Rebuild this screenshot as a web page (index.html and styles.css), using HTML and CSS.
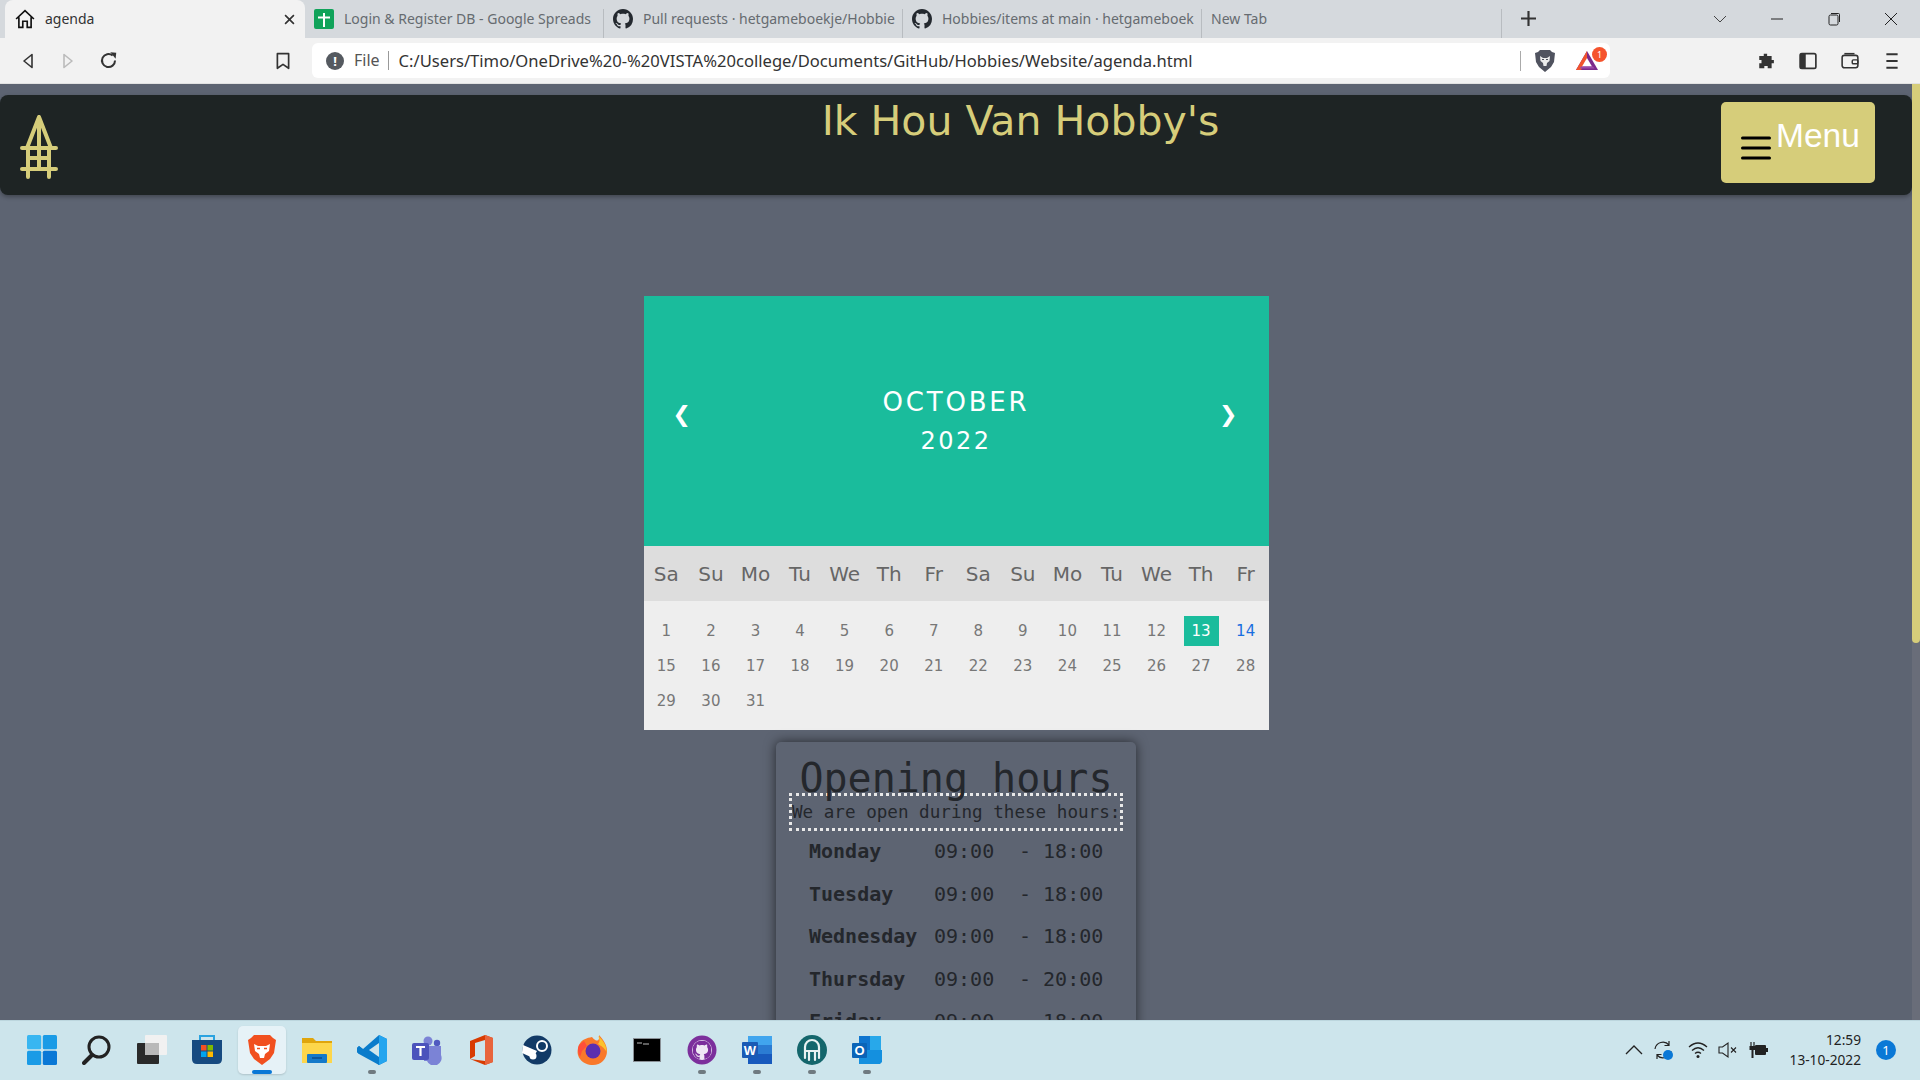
FILE: index.html
```html
<!DOCTYPE html>
<html>
<head>
    <title>agenda</title>
    <link rel="stylesheet" href="styles.css">
</head>
<body>
    <div class="tabstrip">
        <div class="tab tab-active">
            <svg class="tab-icon" viewBox="0 0 18 18"><path d="M1 9 9 1.500 17 9M3.500 7.500V16.500H7V11H11V16.500H14.500V7.500" fill="none" stroke="#111" stroke-width="1.500"/></svg>
            <span class="tab-title">agenda</span>
            <svg class="tab-close" viewBox="0 0 10 10"><path d="M1 1 9 9M9 1 1 9" stroke="#333" stroke-width="1.500"/></svg>
        </div>
        <div class="tab">
            <svg class="tab-icon" viewBox="0 0 20 20"><rect width="20" height="20" rx="2" fill="#10a35a"/><path d="M10 4V18M4 8.500H16" stroke="#fff" stroke-width="2"/></svg>
            <span class="tab-title">Login &amp; Register DB - Google Spreads</span>
        </div>
        <div class="tab">
            <svg class="tab-icon" viewBox="0 0 16 16"><use href="#gh" fill="#24292f"/></svg>
            <span class="tab-title">Pull requests · hetgameboekje/Hobbie</span>
        </div>
        <div class="tab">
            <svg class="tab-icon" viewBox="0 0 16 16"><use href="#gh" fill="#24292f"/></svg>
            <span class="tab-title">Hobbies/items at main · hetgameboek</span>
        </div>
        <div class="tab tab-new">
            <span class="tab-title">New Tab</span>
        </div>
        <svg class="tab-plus" viewBox="0 0 14 14"><path d="M7 0V14M0 7H14" stroke="#333" stroke-width="2"/></svg>
        <div class="window-buttons">
            <svg class="win-btn" viewBox="0 0 14 14"><path d="M1 4 7 10 13 4" fill="none" stroke="#444"/></svg>
            <svg class="win-btn" viewBox="0 0 14 14"><path d="M1 7H13" stroke="#222"/></svg>
            <svg class="win-btn" viewBox="0 0 14 14"><rect x="2" y="3" width="9" height="10" rx="1.500" fill="none" stroke="#222"/><path d="M4 1.500H11.500Q12.500 1.500 12.500 2.500V10" fill="none" stroke="#222"/></svg>
            <svg class="win-btn" viewBox="0 0 14 14"><path d="M1 1 13 13M13 1 1 13" stroke="#222"/></svg>
        </div>
    </div>

    <div class="toolbar">
        <div class="nav-buttons">
            <svg class="tool-icon" viewBox="0 0 16 16"><path d="M12 1.500 4 8 12 14.500Z" fill="none" stroke="#333" stroke-width="1.600" stroke-linejoin="round"/></svg>
            <svg class="tool-icon" viewBox="0 0 16 16"><path d="M4 1.500 12 8 4 14.500Z" fill="none" stroke="#bbb" stroke-width="1.600" stroke-linejoin="round"/></svg>
            <svg class="tool-icon reload" viewBox="0 0 16 16"><path d="M13.500 8A5.500 5.500 0 1 1 11.500 3.800" fill="none" stroke="#333" stroke-width="1.700"/><path d="M9.500 1 14.500 1.500 14 6.500Z" fill="#333"/></svg>
        </div>
        <svg class="bookmark" viewBox="0 0 16 16"><path d="M3 1.500H13V14.500L8 11 3 14.500Z" fill="none" stroke="#333" stroke-width="1.500" stroke-linejoin="round"/></svg>
        <div class="omnibox">
            <span class="info-dot">!</span>
            <span class="scheme">File</span>
            <span class="url">C:/Users/Timo/OneDrive%20-%20VISTA%20college/Documents/GitHub/Hobbies/Website/agenda.html</span>
            <span class="omni-divider"></span>
            <svg class="shield" viewBox="0 0 20 22"><path d="M5 0H15L17 2 20 3 19 12 16 17 10 22 4 17 1 12 0 3 3 2Z" fill="#50535f"/><path d="M5 6 8 8H12L15 6 14.500 11 12 13 11.500 16H8.500L8 13 5.500 11Z" fill="#ececec"/><path d="M7 9.500H9M11 9.500H13" stroke="#50535f"/></svg>
            <div class="bat">
                <svg class="bat-icon" viewBox="0 0 22 19"><path d="M11 0 22 19H0Z" fill="#7c2a8c"/><path d="M11 0 0 19H5L11 8Z" fill="#f2542d"/><path d="M11 7 16 15.500H6Z" fill="#fff"/><path d="M5 15.500H17L18.500 17.500H3.500Z" fill="#9b4ba8"/></svg>
                <span class="bat-badge">1</span>
            </div>
        </div>
        <div class="tool-right">
            <svg class="tool-icon-big" viewBox="0 0 16 16"><path d="M6 1.500H9V3.500H13V7H15V10H13V14.500H9.500V12.500H6.500V14.500H2V10H4V7H2V3.500H6Z" fill="#333"/></svg>
            <svg class="tool-icon-big" viewBox="0 0 16 16"><rect x="1" y="1.500" width="14" height="13" rx="1.500" fill="none" stroke="#333" stroke-width="1.500"/><rect x="1" y="1.500" width="5" height="13" fill="#333"/></svg>
            <svg class="tool-icon-big" viewBox="0 0 16 16"><rect x="1" y="3" width="14" height="11" rx="2" fill="none" stroke="#333" stroke-width="1.400"/><path d="M3 1.500H12" stroke="#333" stroke-width="1.400"/><rect x="10" y="7" width="5" height="3.500" rx="1" fill="none" stroke="#333" stroke-width="1.300"/></svg>
            <svg class="tool-icon-big" viewBox="0 0 16 16"><path d="M3 2H13M3 8H13M3 14H13" stroke="#333" stroke-width="1.600"/></svg>
        </div>
    </div>

    <div class="page">
        <div class="page-content">
            <div class="header">
                <svg class="logo" viewBox="0 0 38 66"><path d="M19 3 7 34M19 3 31 34M19 3V55M8 34V63M29 34V63M2 34H36M2 55H36M8 44H29" fill="none" stroke="#d6cd7a" stroke-width="4" stroke-linecap="round"/></svg>
                <h1 class="site-title">Ik Hou Van Hobby's</h1>
                <div class="menu-button">
                    <svg class="menu-bars" viewBox="0 0 30 24"><path d="M1.500 2H28.500M1.500 12H28.500M1.500 22H28.500" stroke="#000" stroke-width="3" stroke-linecap="round"/></svg>
                    <span class="menu-label">Menu</span>
                </div>
            </div>

            <div class="calendar">
                <div class="month">
                    <span class="month-arrow">&#10094;</span>
                    <div class="month-name">OCTOBER<br><span class="month-year">2022</span></div>
                    <span class="month-arrow">&#10095;</span>
                </div>
                <div class="weekdays">
                    <span>Sa</span><span>Su</span><span>Mo</span><span>Tu</span><span>We</span><span>Th</span><span>Fr</span>
                    <span>Sa</span><span>Su</span><span>Mo</span><span>Tu</span><span>We</span><span>Th</span><span>Fr</span>
                </div>
                <div class="days">
                    <span>1</span><span>2</span><span>3</span><span>4</span><span>5</span><span>6</span><span>7</span>
                    <span>8</span><span>9</span><span>10</span><span>11</span><span>12</span><span class="today">13</span><span class="next-day">14</span>
                    <span>15</span><span>16</span><span>17</span><span>18</span><span>19</span><span>20</span><span>21</span>
                    <span>22</span><span>23</span><span>24</span><span>25</span><span>26</span><span>27</span><span>28</span>
                    <span>29</span><span>30</span><span>31</span>
                </div>
            </div>

            <div class="hours-card">
                <h2 class="hours-title">Opening hours</h2>
                <p class="hours-intro">We are open during these hours:</p>
                <div class="hours-list">
                    <b>Monday</b><span>09:00</span><span>- 18:00</span>
                    <b>Tuesday</b><span>09:00</span><span>- 18:00</span>
                    <b>Wednesday</b><span>09:00</span><span>- 18:00</span>
                    <b>Thursday</b><span>09:00</span><span>- 20:00</span>
                    <b>Friday</b><span>09:00</span><span>- 18:00</span>
                </div>
            </div>
        </div>
        <div class="scrollbar"><div class="scroll-thumb"></div></div>
    </div>

    <div class="taskbar">
        <div class="task-icons">
            <div class="task-item">
                <svg viewBox="0 0 30 30"><rect width="14.200" height="14.200" rx="1.500" fill="#38b6f1"/><rect x="15.800" width="14.200" height="14.200" rx="1.500" fill="#1a9be6"/><rect y="15.800" width="14.200" height="14.200" rx="1.500" fill="#1a9be6"/><rect x="15.800" y="15.800" width="14.200" height="14.200" rx="1.500" fill="#0a78d6"/></svg>
            </div>
            <div class="task-item">
                <svg viewBox="0 0 30 30"><circle cx="17" cy="12" r="10" fill="none" stroke="#222" stroke-width="3"/><path d="M10 20 2 28" stroke="#222" stroke-width="4" stroke-linecap="round"/></svg>
            </div>
            <div class="task-item">
                <svg viewBox="0 0 30 30"><rect x="8" width="22" height="20" rx="1" fill="#f1f1f1"/><rect y="8" width="22" height="21" rx="1" fill="#2a2a2a"/><rect x="8" y="8" width="14" height="12" fill="#b9b9b9"/></svg>
            </div>
            <div class="task-item">
                <svg viewBox="0 0 30 30"><path d="M8 5V1H22V5" fill="none" stroke="#2aa3e0" stroke-width="2"/><path d="M0 5H30V24Q30 29 25 29H5Q0 29 0 24Z" fill="#164a80"/><rect x="9" y="10" width="5.500" height="5.500" fill="#f25022"/><rect x="15.500" y="10" width="5.500" height="5.500" fill="#7fba00"/><rect x="9" y="16.500" width="5.500" height="5.500" fill="#00a4ef"/><rect x="15.500" y="16.500" width="5.500" height="5.500" fill="#ffb900"/></svg>
            </div>
            <div class="task-item task-current">
                <svg viewBox="0 0 30 30"><path d="M7 0H23L26 3 29 5 27 18 23 24 15 30 7 24 3 18 1 5 4 3Z" fill="#f1501f"/><path d="M7 9 11 11H19L23 9 22 16 18 19 17 23H13L12 19 8 16Z" fill="#fff"/><path d="M10 13.500H13M17 13.500H20" stroke="#f1501f" stroke-width="1.500"/></svg>
                <span class="task-dot"></span>
            </div>
            <div class="task-item">
                <svg viewBox="0 0 30 30"><path d="M0 3H11L14 6H30V28H0Z" fill="#e0a50c"/><path d="M0 8H30V28H0Z" fill="#fdd64b"/><rect x="5" y="19" width="20" height="9" rx="1" fill="#1479c9"/><path d="M10 23H20" stroke="#0a4d8c" stroke-width="1.500"/></svg>
            </div>
            <div class="task-item">
                <svg viewBox="0 0 30 30"><path d="M22 0 30 4V26L22 30 6 16 2 19 0 17V13L2 11 6 14Z" fill="#0a7ccb"/><path d="M22 0 30 4V26L22 30Z" fill="#24a5ef"/><path d="M22 8V22L12 15Z" fill="#cfe6ec"/><path d="M0 13 2 11 22 27V30L2 19 0 17Z" fill="#0a7ccb"/></svg>
                <span class="task-dot"></span>
            </div>
            <div class="task-item">
                <svg viewBox="0 0 30 30"><circle cx="16" cy="6" r="4.500" fill="#7b83d6"/><circle cx="25" cy="8" r="3.200" fill="#505ac0"/><path d="M12 11H29V20A7 7 0 0 1 15 26H12Z" fill="#7b83d6"/><rect y="8" width="17" height="17" rx="2" fill="#4b53bc"/><path d="M4 12H13M8.500 12V21" stroke="#fff" stroke-width="2.200"/></svg>
            </div>
            <div class="task-item">
                <svg viewBox="0 0 30 30"><path d="M3 6 18 0 26 3V27L18 30 3 24 18 26V5L8 8V21L3 24Z" fill="#d83b01"/><path d="M18 0 26 3V27L18 30Z" fill="#e8643c"/></svg>
            </div>
            <div class="task-item">
                <svg viewBox="0 0 30 30"><circle cx="15" cy="15" r="14.500" fill="#123a66"/><path d="M0 18 11 23 15 16 1 10Z" fill="#fff"/><circle cx="20" cy="11" r="5" fill="none" stroke="#fff" stroke-width="2"/><circle cx="11" cy="21" r="3.500" fill="#fff"/></svg>
            </div>
            <div class="task-item">
                <svg viewBox="0 0 30 30"><path d="M15 2C10 3 5 4 2 10 0 15 0 20 3 24 6 28 11 30 16 30 24 30 30 24 30 16 30 11 27 5 22 0 23 6 20 8 15 2Z" fill="#f9792b"/><path d="M21 1C26 5 30 11 29.500 17 27 12 24 11 21 9 23 7 23 4 21 1Z" fill="#fcc22b"/><circle cx="16" cy="16" r="7.500" fill="#5b2fb0"/><path d="M2 10 7 6 10 11 5 16 3 22C1 18 0 14 2 10Z" fill="#ff4f3a"/></svg>
            </div>
            <div class="task-item">
                <svg viewBox="0 0 30 30"><rect x="1" y="3" width="28" height="24" fill="#8a9096"/><rect x="2" y="4" width="26" height="22" fill="#000"/><path d="M5 8H10M11 9H17" stroke="#bbb"/></svg>
            </div>
            <div class="task-item">
                <svg viewBox="0 0 30 30"><circle cx="15" cy="15" r="12" fill="none" stroke="#7c2f9c" stroke-width="5"/><circle cx="15" cy="15" r="10" fill="#f0e8f5"/><use href="#gh" x="5.500" y="5.500" width="19" height="19" fill="#7c2f9c"/></svg>
                <span class="task-dot"></span>
            </div>
            <div class="task-item">
                <svg viewBox="0 0 30 30"><rect x="6" y="1" width="24" height="9" fill="#41a5ee"/><rect x="6" y="10" width="24" height="9" fill="#2b7cd3"/><rect x="6" y="19" width="24" height="10" fill="#185abd"/><rect y="7" width="16" height="16" rx="1" fill="#1a5bb5"/><text class="tile-letter" x="8" y="19.500">W</text></svg>
                <span class="task-dot"></span>
            </div>
            <div class="task-item">
                <svg viewBox="0 0 30 30"><circle cx="15" cy="15" r="15" fill="#14666c"/><path d="M8 23V12A7 7 0 0 1 22 12V23M12 25V17M18 25V17M8 16H22" fill="none" stroke="#e8f2f2" stroke-width="2.200" stroke-linecap="round"/></svg>
                <span class="task-dot"></span>
            </div>
            <div class="task-item">
                <svg viewBox="0 0 30 30"><rect x="7" y="1" width="22" height="14" fill="#0f75cf"/><rect x="18" y="1" width="11" height="14" fill="#28a8ea"/><path d="M7 15H30V27L28 29H7Z" fill="#1490df"/><rect y="8" width="15" height="15" rx="1" fill="#0a64b8"/><text class="tile-letter" x="7.500" y="20">O</text></svg>
                <span class="task-dot"></span>
            </div>
        </div>
        <div class="tray">
            <svg class="tray-chevron" viewBox="0 0 18 18"><path d="M1 13 9 5 17 13" fill="none" stroke="#222" stroke-width="1.300"/></svg>
            <div class="tray-sync">
                <svg class="tray-icon" viewBox="0 0 20 20"><path d="M2 9A8 8 0 0 1 16 5M18 11A8 8 0 0 1 4 15M16 1V5.500H11.500M4 19V14.500H8.500" fill="none" stroke="#222" stroke-width="1.200"/></svg>
                <span class="sync-dot"></span>
            </div>
            <svg class="tray-icon" viewBox="0 0 20 18"><path d="M1 6Q10-2 19 6M4 9.500Q10 4 16 9.500M7 12.500Q10 10 13 12.500" fill="none" stroke="#222" stroke-width="1.300"/><circle cx="10" cy="15.500" r="1.500" fill="#222"/></svg>
            <svg class="tray-icon" viewBox="0 0 20 18"><path d="M1 6H4.500L10 2V16L4.500 12H1Z" fill="none" stroke="#222" stroke-width="1.100"/><path d="M13 6.500 18 11.500M18 6.500 13 11.500" stroke="#222" stroke-width="1.100"/></svg>
            <svg class="tray-icon" viewBox="0 0 20 18"><path d="M3 1V5M6 1V5" stroke="#222" stroke-width="1.200"/><path d="M1.500 5H7.500V9H5.500V17H3.500V9H1.500Z" fill="#222"/><rect x="7" y="4" width="11" height="10" rx="1" fill="#222"/><rect x="18" y="7" width="2" height="4" fill="#222"/></svg>
            <div class="clock"><span>12:59</span><span>13-10-2022</span></div>
            <span class="notify-badge">1</span>
        </div>
    </div>

    <svg class="defs" width="0" height="0"><defs><symbol id="gh" viewBox="0 0 16 16"><path d="M8 0C3.580 0 0 3.580 0 8c0 3.540 2.290 6.530 5.470 7.590.4.070.55-.17.55-.38 0-.19-.01-.82-.01-1.490-2.010.37-2.530-.49-2.690-.94-.09-.23-.48-.94-.82-1.130-.28-.15-.68-.52-.01-.53.63-.01 1.080.58 1.230.82.72 1.210 1.870.87 2.330.66.070-.52.280-.87.510-1.070-1.780-.2-3.640-.89-3.640-3.950 0-.87.310-1.590.82-2.150-.08-.2-.36-1.020.08-2.120 0 0 .67-.21 2.200.82.640-.18 1.320-.27 2-.27s1.360.09 2 .27c1.530-1.040 2.200-.82 2.200-.82.440 1.100.16 1.920.08 2.120.51.560.82 1.270.82 2.150 0 3.070-1.870 3.750-3.650 3.950.29.250.54.730.54 1.480 0 1.070-.01 1.930-.01 2.200 0 .21.150.46.550.38A8.010 8.010 0 0 0 16 8c0-4.420-3.580-8-8-8z"/></symbol></defs></svg>
</body>
</html>
```

FILE: styles.css
```css
* {
    box-sizing: border-box;
}

body {
    display: flex;
    flex-direction: column;
    height: 1080px;
    margin: 0;
    overflow: hidden;
    font-family: "Noto Sans", sans-serif;
    background-color: #5d6472;
}

.defs {
    display: block;
    position: absolute;
}

/* browser tabs */
.tabstrip {
    display: flex;
    align-items: flex-start;
    height: 38px;
    padding-left: 5px;
    background-color: #d5d9dd;
}

.tab {
    display: flex;
    flex: none;
    align-items: center;
    gap: 10px;
    width: 299px;
    height: 29px;
    margin-top: 9px;
    padding: 0 3px 9px 9px;
    border-right: 1px solid #b8bcc0;
    overflow: hidden;
    white-space: nowrap;
}

.tab-active {
    width: 300px;
    height: 38px;
    margin: 0;
    padding: 0 10px;
    border: none;
    border-radius: 8px 8px 0 0;
    background-color: #f2f2f2;
}

.tab-new {
    width: 300px;
}

.tab-icon {
    flex: none;
    width: 20px;
    height: 20px;
}

.tab-title {
    padding-bottom: 2px;
    font-size: 14px;
    color: #666b70;
}

.tab-active .tab-title {
    color: #333;
}

.tab-close {
    flex: none;
    width: 11px;
    height: 11px;
    margin-left: auto;
}

.tab-plus {
    flex: none;
    width: 15px;
    height: 15px;
    margin: 11px 0 0 19px;
}

.window-buttons {
    display: flex;
    gap: 43px;
    margin: 12px 0 0 auto;
    padding-right: 22px;
}

.win-btn {
    width: 14px;
    height: 14px;
}

/* address bar */
.toolbar {
    display: flex;
    align-items: center;
    height: 46px;
    background-color: #f2f2f2;
    border-bottom: 1px solid #e2e2e2;
}

.nav-buttons {
    display: flex;
    align-items: center;
    gap: 24px;
    margin-left: 20px;
}

.tool-icon {
    flex: none;
    width: 16px;
    height: 16px;
}

.reload {
    width: 19px;
    height: 19px;
    margin: 0 -1.500px;
}

.tool-icon-big {
    flex: none;
    width: 18px;
    height: 18px;
}

.bookmark {
    flex: none;
    width: 18px;
    height: 18px;
    margin: 0 20px 0 158px;
}

.omnibox {
    display: flex;
    align-items: center;
    flex: none;
    width: 1298px;
    height: 35px;
    padding-left: 14px;
    background-color: #fff;
    border-radius: 6px;
    font-size: 16.600px;
    color: #444;
}

.info-dot {
    display: flex;
    align-items: center;
    justify-content: center;
    width: 18px;
    height: 18px;
    margin-right: 10px;
    border-radius: 50%;
    background-color: #555a60;
    color: #fff;
    font-size: 13px;
    font-weight: bold;
}

.scheme {
    padding-right: 8px;
    border-right: 1px solid #999;
    font-size: 16px;
    line-height: 19px;
    color: #555;
}

.url {
    margin-left: 10px;
    white-space: nowrap;
    color: #333;
}

.omni-divider {
    width: 1px;
    height: 20px;
    margin-left: auto;
    background-color: #aaa;
}

.shield {
    flex: none;
    width: 20px;
    height: 22px;
    margin: 0 21px 0 14px;
}

.bat {
    position: relative;
    flex: none;
    width: 22px;
    height: 19px;
    margin-right: 12px;
}

.bat-icon {
    display: block;
    width: 22px;
    height: 19px;
}

.bat-badge {
    position: absolute;
    top: -4px;
    right: -9px;
    width: 15px;
    height: 15px;
    border-radius: 50%;
    background-color: #f5532d;
    color: #fff;
    font-size: 9px;
    line-height: 15px;
    text-align: center;
}

.tool-right {
    display: flex;
    gap: 24px;
    margin-left: auto;
    padding-right: 19px;
}

/* website */
.page {
    display: flex;
    flex: 1;
    min-height: 0;
    overflow: hidden;
    background-color: #5d6472;
}

.page-content {
    display: flex;
    flex-direction: column;
    align-items: center;
    flex: 1;
    min-width: 0;
    padding-top: 11px;
    overflow: hidden;
}

.scrollbar {
    flex: none;
    width: 8px;
    background-color: #696d79;
}

.scroll-thumb {
    height: 559px;
    border-radius: 0 0 4px 4px;
    background-color: #d6cd7a;
}

.header {
    position: relative;
    display: flex;
    justify-content: center;
    flex: none;
    width: 100%;
    height: 100px;
    padding-left: 129px;
    border-radius: 8px;
    background-color: #1e2424;
    box-shadow: 0 2px 4px rgba(0,0,0,0.3);
}

.logo {
    position: absolute;
    left: 20px;
    top: 19px;
    width: 38px;
    height: 66px;
}

.site-title {
    margin: 0;
    padding-top: 3px;
    font-family: "DejaVu Sans", Verdana, sans-serif;
    font-size: 41px;
    font-weight: normal;
    line-height: 46px;
    color: #d6cd7a;
}

.menu-button {
    position: absolute;
    right: 37px;
    top: 7px;
    display: flex;
    align-items: flex-start;
    gap: 5px;
    width: 154px;
    height: 81px;
    padding: 17px 0 0 20px;
    border-radius: 5px;
    background-color: #d6cd7a;
}

.menu-bars {
    flex: none;
    width: 30px;
    height: 24px;
    margin-top: 17px;
}

.menu-label {
    font-family: "Liberation Sans", Arial, sans-serif;
    font-size: 33.500px;
    line-height: 34px;
    color: #fff;
}

/* calendar */
.calendar {
    flex: none;
    width: 625px;
    margin-top: 101px;
    font-family: "DejaVu Sans", Verdana, sans-serif;
    color: #666;
}

.month {
    display: flex;
    align-items: center;
    justify-content: space-between;
    height: 250px;
    padding: 0 31px 0 29px;
    background-color: #1abc9c;
    color: #fff;
}

.month-arrow {
    margin-bottom: 14px;
    font-size: 22px;
}

.month-name {
    padding-left: 2px;
    font-size: 26px;
    line-height: 38px;
    letter-spacing: 2.800px;
    text-align: center;
}

.month-year {
    font-size: 24px;
    letter-spacing: 2.500px;
}

.weekdays,
.days {
    display: grid;
    grid-template-columns: repeat(14, 44.570px);
    justify-content: center;
    justify-items: center;
}

.weekdays {
    align-items: center;
    height: 55px;
    background-color: #ddd;
    font-size: 20px;
}

.days {
    grid-auto-rows: 35px;
    align-items: center;
    height: 129px;
    padding-top: 12px;
    background-color: #eee;
    font-size: 15px;
    color: #777;
}

.today {
    padding: 6px 8px;
    background-color: #1abc9c;
    color: #fff;
}

.next-day {
    color: #1a6ee0;
}

/* opening hours */
.hours-card {
    flex: none;
    width: 360px;
    height: 400px;
    margin-top: 12px;
    padding-top: 21px;
    border-radius: 5px;
    background-color: #5d6472;
    box-shadow: 0 0 12px rgba(0,0,0,0.6);
    font-family: "DejaVu Sans Mono", monospace;
    color: #24272c;
}

.hours-title {
    margin: 0;
    font-size: 40px;
    font-weight: normal;
    line-height: 30px;
    text-align: center;
}

.hours-intro {
    width: 334px;
    height: 38px;
    margin: 0 auto;
    border: 3px dotted #e8e8e8;
    font-size: 17.600px;
    line-height: 32px;
    text-align: center;
    white-space: nowrap;
}

.hours-list {
    display: grid;
    grid-template-columns: 125px 85px auto;
    grid-auto-rows: 42.500px;
    padding: 2px 0 0 33px;
    font-size: 20px;
    line-height: 36px;
}

/* windows taskbar */
.taskbar {
    display: flex;
    flex: none;
    align-items: center;
    justify-content: space-between;
    height: 60px;
    padding-bottom: 1px;
    background-color: #cde5ec;
    border-top: 1px solid #bcd6de;
}

.task-icons {
    display: flex;
    gap: 7px;
    margin-left: 18px;
}

.task-item {
    position: relative;
    display: flex;
    align-items: center;
    justify-content: center;
    width: 48px;
    height: 48px;
}

.task-item svg {
    width: 30px;
    height: 30px;
}

.task-current {
    border-radius: 5px;
    background-color: #e6f2f7;
    box-shadow: 0 1px 2px rgba(0,0,0,0.15);
}

.task-dot {
    position: absolute;
    bottom: 0;
    left: 50%;
    width: 8px;
    height: 4px;
    margin-left: -4px;
    border-radius: 2px;
    background-color: #6f7a80;
}

.task-current .task-dot {
    width: 20px;
    margin-left: -10px;
    background-color: #0a78d6;
}

.tile-letter {
    font-family: "Liberation Sans", Arial, sans-serif;
    font-size: 13px;
    font-weight: bold;
    fill: #fff;
    text-anchor: middle;
}

.tray {
    display: flex;
    align-items: center;
    gap: 10px;
    padding-right: 24px;
}

.tray-chevron {
    display: block;
    width: 18px;
    height: 18px;
}

.tray-icon {
    display: block;
    width: 20px;
    height: 20px;
}

.tray-sync {
    position: relative;
    width: 20px;
    margin-right: 5px;
}

.sync-dot {
    position: absolute;
    right: 0;
    bottom: 0;
    width: 10px;
    height: 10px;
    border-radius: 50%;
    background-color: #0a78d6;
}

.clock {
    display: flex;
    flex-direction: column;
    align-items: flex-end;
    margin-left: 12px;
    font-size: 13.700px;
    line-height: 20px;
    color: #222;
}

.notify-badge {
    width: 20px;
    height: 20px;
    margin-left: 5px;
    border-radius: 50%;
    background-color: #0a78d6;
    color: #fff;
    font-size: 13px;
    line-height: 20px;
    text-align: center;
}
```
